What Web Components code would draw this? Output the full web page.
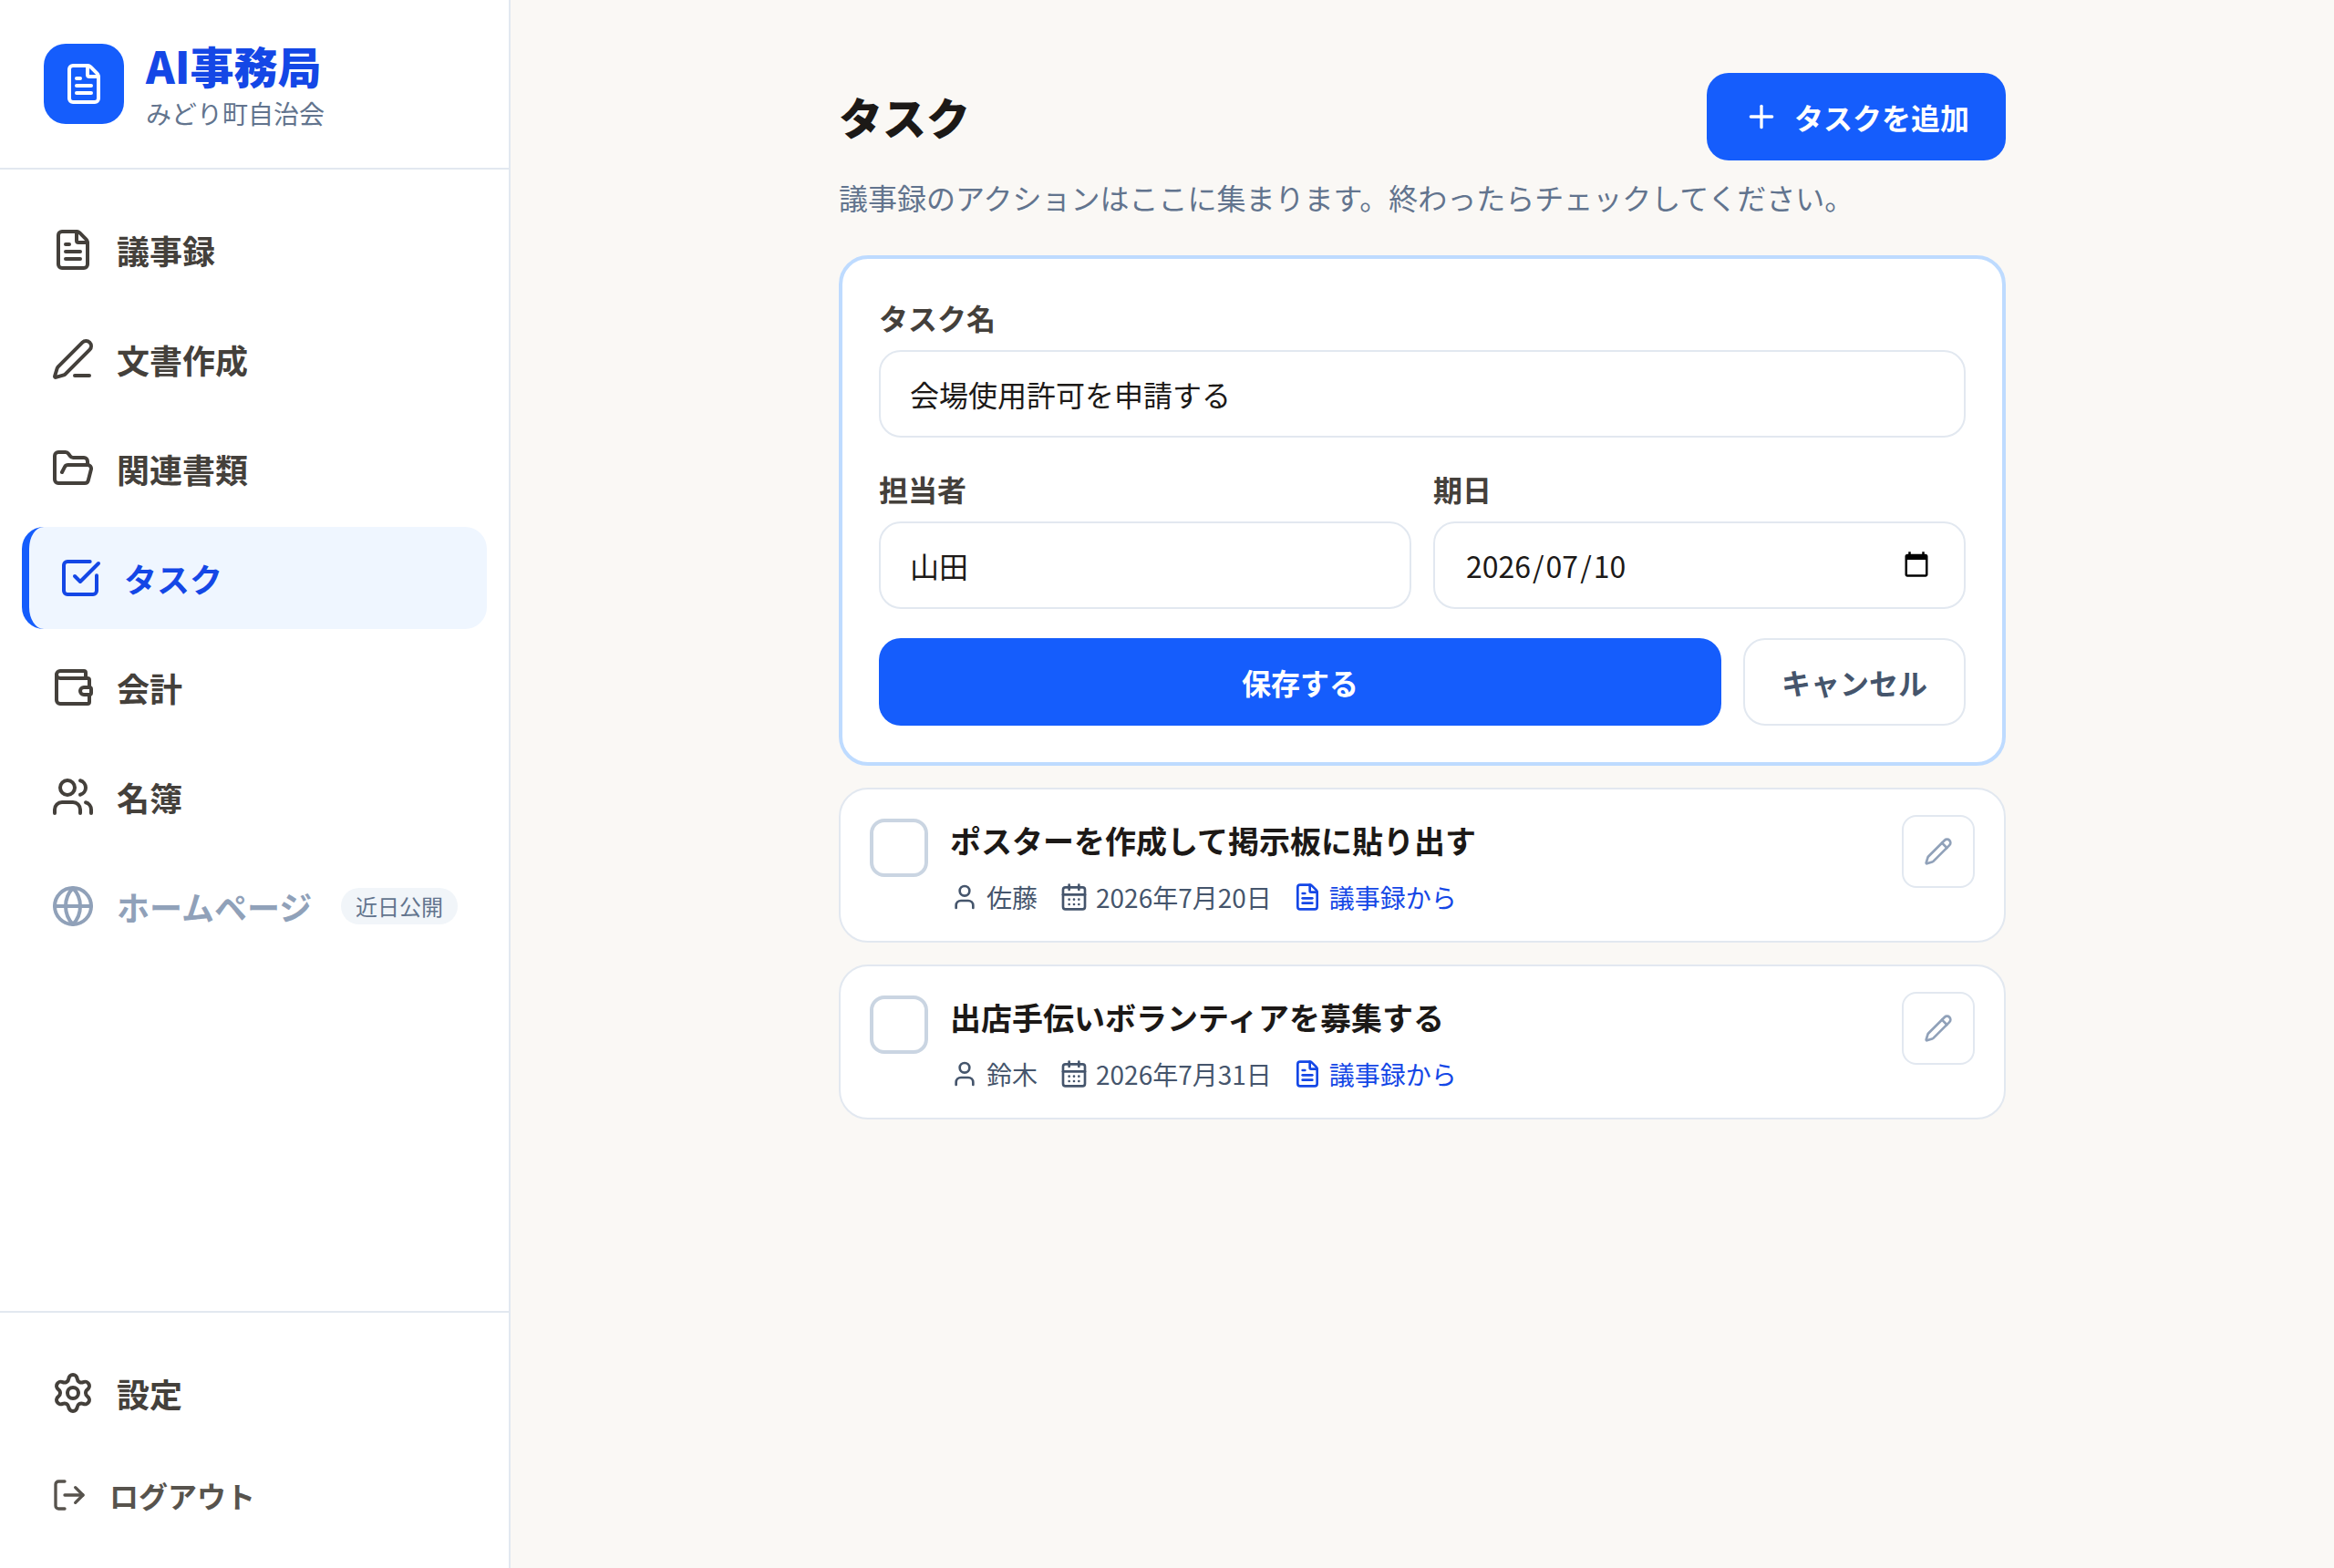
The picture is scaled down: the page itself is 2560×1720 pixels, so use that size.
<!DOCTYPE html>
<html lang="ja">
<head>
<meta charset="utf-8">
<title>AI事務局 - タスク</title>
<style>
    body {
        margin: 0;
        background: #faf8f5;
        color: #1c1917;
        font-family: "Noto Sans CJK JP", sans-serif;
        font-size: 32px;
        line-height: 48px;
    }
</style>
</head>
<body>
<task-app></task-app>

<script>
const icons = {
    'file-text': '<path d="M6 22a2 2 0 0 1-2-2V4a2 2 0 0 1 2-2h8a2.4 2.4 0 0 1 1.704.706l3.588 3.588A2.4 2.4 0 0 1 20 8v12a2 2 0 0 1-2 2z"/><path d="M14 2v5a1 1 0 0 0 1 1h5"/><path d="M10 9H8"/><path d="M16 13H8"/><path d="M16 17H8"/>',
    'pen-line': '<path d="M13 21h8"/><path d="M21.174 6.812a1 1 0 0 0-3.986-3.987L3.842 16.174a2 2 0 0 0-.5.83l-1.321 4.352a.5.5 0 0 0 .623.622l4.353-1.32a2 2 0 0 0 .83-.497z"/>',
    'folder-open': '<path d="m6 14 1.5-2.9A2 2 0 0 1 9.24 10H20a2 2 0 0 1 1.94 2.5l-1.54 6a2 2 0 0 1-1.95 1.5H4a2 2 0 0 1-2-2V5a2 2 0 0 1 2-2h3.9a2 2 0 0 1 1.69.9l.81 1.2a2 2 0 0 0 1.67.9H18a2 2 0 0 1 2 2v2"/>',
    'check-square': '<path d="M21 10.656V19a2 2 0 0 1-2 2H5a2 2 0 0 1-2-2V5a2 2 0 0 1 2-2h12.344"/><path d="m9 11 3 3L22 4"/>',
    'wallet': '<path d="M19 7V4a1 1 0 0 0-1-1H5a2 2 0 0 0 0 4h15a1 1 0 0 1 1 1v4h-3a2 2 0 0 0 0 4h3a1 1 0 0 0 1-1v-2a1 1 0 0 0-1-1"/><path d="M3 5v14a2 2 0 0 0 2 2h15a1 1 0 0 0 1-1v-4"/>',
    'users': '<path d="M16 21v-2a4 4 0 0 0-4-4H6a4 4 0 0 0-4 4v2"/><path d="M16 3.128a4 4 0 0 1 0 7.744"/><path d="M22 21v-2a4 4 0 0 0-3-3.87"/><circle cx="9" cy="7" r="4"/>',
    'globe': '<circle cx="12" cy="12" r="10"/><path d="M12 2a14.5 14.5 0 0 0 0 20 14.5 14.5 0 0 0 0-20"/><path d="M2 12h20"/>',
    'settings': '<path d="M9.671 4.136a2.34 2.34 0 0 1 4.659 0 2.34 2.34 0 0 0 3.319 1.915 2.34 2.34 0 0 1 2.33 4.033 2.34 2.34 0 0 0 0 3.831 2.34 2.34 0 0 1-2.33 4.033 2.34 2.34 0 0 0-3.319 1.915 2.34 2.34 0 0 1-4.659 0 2.34 2.34 0 0 0-3.32-1.915 2.34 2.34 0 0 1-2.33-4.033 2.34 2.34 0 0 0 0-3.831A2.34 2.34 0 0 1 6.35 6.051a2.34 2.34 0 0 0 3.319-1.915"/><circle cx="12" cy="12" r="3"/>',
    'log-out': '<path d="m16 17 5-5-5-5"/><path d="M21 12H9"/><path d="M9 21H5a2 2 0 0 1-2-2V5a2 2 0 0 1 2-2h4"/>',
    'plus': '<path d="M5 12h14"/><path d="M12 5v14"/>',
    'user': '<path d="M19 21v-2a4 4 0 0 0-4-4H9a4 4 0 0 0-4 4v2"/><circle cx="12" cy="7" r="4"/>',
    'calendar': '<path d="M8 2v4"/><path d="M16 2v4"/><rect width="18" height="18" x="3" y="4" rx="2"/><path d="M3 10h18"/><path d="M8 14h.01"/><path d="M12 14h.01"/><path d="M16 14h.01"/><path d="M8 18h.01"/><path d="M12 18h.01"/><path d="M16 18h.01"/>',
    'pencil': '<path d="M21.174 6.812a1 1 0 0 0-3.986-3.987L3.842 16.174a2 2 0 0 0-.5.83l-1.321 4.352a.5.5 0 0 0 .623.622l4.353-1.32a2 2 0 0 0 .83-.497z"/><path d="m15 5 4 4"/>',
    'date-picker': '<path fill="currentColor" stroke="none" d="M20 3h-1V1h-2v2H7V1H5v2H4c-1.1 0-2 .9-2 2v16c0 1.1.9 2 2 2h16c1.1 0 2-.9 2-2V5c0-1.1-.9-2-2-2zm0 18H4V8h16v13z"/>'
};

// Creates the open shadow root and fills it.
class BaseElement extends HTMLElement {

    constructor() {
        super();
        this.attachShadow({ mode: 'open' });
    }

    connectedCallback() {
        this.shadowRoot.innerHTML = this.render();
    }

}

class AppIcon extends BaseElement {

    render() {
        const size = this.getAttribute('size') || '48';
        return `
            <style>
                :host {
                    display: block;
                    flex: none;
                    width: ${size}px;
                    height: ${size}px;
                }
                svg {
                    display: block;
                    width: 100%;
                    height: 100%;
                }
            </style>
            <svg viewBox="0 0 24 24" fill="none" stroke="currentColor" stroke-width="2" stroke-linecap="round" stroke-linejoin="round">${icons[this.getAttribute('name')]}</svg>
        `;
    }

}

class NavItem extends BaseElement {

    render() {
        return `
            <style>
                :host {
                    display: flex;
                    align-items: center;
                    gap: 24px;
                    box-sizing: border-box;
                    height: 112px;
                    padding: 0 32px;
                    border-radius: 24px;
                    font-size: 36px;
                    font-weight: 700;
                    color: #44403b;
                    white-space: nowrap;
                }
                :host([active]) {
                    border-left: 8px solid #155dfc;
                    background: #eff6ff;
                    color: #1447e6;
                }
                :host([disabled]) {
                    color: #90a1b9;
                }
                :host([small]) {
                    height: 96px;
                    font-size: 32px;
                    color: #57534d;
                }
                ::slotted([slot="badge"]) {
                    margin-left: auto;
                    padding: 0 16px;
                    border-radius: 20px;
                    background: #f1f5f9;
                    color: #62748e;
                    font-size: 24px;
                    font-weight: 400;
                    line-height: 40px;
                }
            </style>
            <app-icon name="${this.getAttribute('icon')}" size="${this.hasAttribute('small') ? 40 : 48}"></app-icon>
            <span><slot></slot></span>
            <slot name="badge"></slot>
        `;
    }

}

class AppSidebar extends BaseElement {

    render() {
        return `
            <style>
                :host {
                    display: flex;
                    flex-direction: column;
                    flex: none;
                    box-sizing: border-box;
                    width: 560px;
                    background: #fff;
                    border-right: 2px solid #e2e8f0;
                }
                header {
                    display: flex;
                    align-items: center;
                    gap: 24px;
                    padding: 40px 48px;
                    border-bottom: 2px solid #e2e8f0;
                }
                .logo {
                    display: flex;
                    align-items: center;
                    justify-content: center;
                    width: 88px;
                    height: 88px;
                    border-radius: 24px;
                    background: #155dfc;
                    color: #fff;
                }
                .name {
                    margin-bottom: 2px;
                    font-size: 48px;
                    font-weight: 800;
                    line-height: 62px;
                    color: #1447e6;
                }
                .org {
                    font-size: 28px;
                    line-height: 40px;
                    color: #62748e;
                }
                nav, footer {
                    display: flex;
                    flex-direction: column;
                    gap: 8px;
                    padding: 32px 24px;
                }
                nav {
                    flex: 1;
                }
                footer {
                    border-top: 2px solid #e2e8f0;
                }
            </style>
            <header>
                <div class="logo"><app-icon name="file-text"></app-icon></div>
                <div>
                    <div class="name">AI事務局</div>
                    <div class="org">みどり町自治会</div>
                </div>
            </header>
            <nav>
                <nav-item icon="file-text">議事録</nav-item>
                <nav-item icon="pen-line">文書作成</nav-item>
                <nav-item icon="folder-open">関連書類</nav-item>
                <nav-item icon="check-square" active>タスク</nav-item>
                <nav-item icon="wallet">会計</nav-item>
                <nav-item icon="users">名簿</nav-item>
                <nav-item icon="globe" disabled>ホームページ<span slot="badge">近日公開</span></nav-item>
            </nav>
            <footer>
                <nav-item icon="settings">設定</nav-item>
                <nav-item icon="log-out" small>ログアウト</nav-item>
            </footer>
        `;
    }

}

class AppButton extends BaseElement {

    render() {
        const icon = this.getAttribute('icon');
        return `
            <style>
                :host {
                    display: flex;
                    align-items: center;
                    justify-content: center;
                    gap: 16px;
                    box-sizing: border-box;
                    height: 96px;
                    padding: 0 40px;
                    border-radius: 24px;
                    background: #155dfc;
                    color: #fff;
                    font-weight: 700;
                    white-space: nowrap;
                }
                :host([outline]) {
                    border: 2px solid #e2e8f0;
                    background: #fff;
                    color: #45556c;
                }
            </style>
            ${icon ? `<app-icon name="${icon}" size="40"></app-icon>` : ''}
            <span><slot></slot></span>
        `;
    }

}

class FormField extends BaseElement {

    render() {
        return `
            <style>
                :host {
                    display: block;
                }
                .label {
                    margin-bottom: 12px;
                    font-weight: 700;
                    color: #44403b;
                }
                .box {
                    display: flex;
                    align-items: center;
                    justify-content: space-between;
                    box-sizing: border-box;
                    height: 96px;
                    padding: 0 32px;
                    border: 2px solid #e2e8f0;
                    border-radius: 24px;
                    background: #fff;
                }
            </style>
            <div class="label">${this.getAttribute('label')}</div>
            <div class="box">
                <span><slot></slot></span>
                <slot name="end"></slot>
            </div>
        `;
    }

}

class TaskForm extends BaseElement {

    render() {
        return `
            <style>
                :host {
                    display: flex;
                    flex-direction: column;
                    gap: 32px;
                    padding: 40px;
                    border: 4px solid #bedbff;
                    border-radius: 32px;
                    background: #fff;
                }
                .row {
                    display: grid;
                    grid-template-columns: 1fr 1fr;
                    gap: 24px;
                }
                .actions {
                    display: flex;
                    gap: 24px;
                }
                .save {
                    flex: 1;
                }
                .part {
                    padding: 0 2px;
                }
                .picker {
                    margin: 0 5px 3px 0;
                    color: #000;
                }
            </style>
            <form-field label="タスク名">会場使用許可を申請する</form-field>
            <div class="row">
                <form-field label="担当者">山田</form-field>
                <form-field label="期日"><span class="part">2026</span>/<span class="part">07</span>/<span class="part">10</span><app-icon class="picker" slot="end" name="date-picker" size="30"></app-icon></form-field>
            </div>
            <div class="actions">
                <app-button class="save">保存する</app-button>
                <app-button outline>キャンセル</app-button>
            </div>
        `;
    }

}

class TaskCard extends BaseElement {

    render() {
        return `
            <style>
                :host {
                    display: flex;
                    align-items: flex-start;
                    gap: 24px;
                    padding: 28px 32px;
                    border: 2px solid #e2e8f0;
                    border-radius: 32px;
                    background: #fff;
                }
                .check {
                    box-sizing: border-box;
                    width: 64px;
                    height: 64px;
                    margin-top: 4px;
                    border: 4px solid #cad5e2;
                    border-radius: 16px;
                }
                .body {
                    flex: 1;
                }
                .title {
                    font-size: 34px;
                    font-weight: 700;
                    line-height: 55px;
                }
                .meta {
                    display: flex;
                    gap: 24px;
                    margin-top: 15px;
                    font-size: 28px;
                    line-height: 40px;
                    color: #45556c;
                }
                .meta span {
                    display: flex;
                    align-items: center;
                    gap: 8px;
                }
                .meta .source {
                    margin-left: -1px;
                    color: #1447e6;
                }
                .edit {
                    display: flex;
                    align-items: center;
                    justify-content: center;
                    box-sizing: border-box;
                    width: 80px;
                    height: 80px;
                    border: 2px solid #e2e8f0;
                    border-radius: 16px;
                    color: #90a1b9;
                }
            </style>
            <div class="check"></div>
            <div class="body">
                <div class="title"><slot></slot></div>
                <div class="meta">
                    <span><app-icon name="user" size="32"></app-icon>${this.getAttribute('assignee')}</span>
                    <span><app-icon name="calendar" size="32"></app-icon>${this.getAttribute('due')}</span>
                    <span class="source"><app-icon name="file-text" size="32"></app-icon>議事録から</span>
                </div>
            </div>
            <div class="edit"><app-icon name="pencil" size="32"></app-icon></div>
        `;
    }

}

class TaskApp extends BaseElement {

    render() {
        return `
            <style>
                :host {
                    display: flex;
                    min-height: 100vh;
                }
                main {
                    flex: 1;
                }
                .content {
                    width: 1280px;
                    margin: 0 auto;
                    padding: 80px 0;
                }
                .head {
                    display: flex;
                    align-items: center;
                    justify-content: space-between;
                }
                h1 {
                    margin: 0 0 2px;
                    font-size: 48px;
                    font-weight: 800;
                    line-height: 64px;
                }
                p {
                    margin: 16px 0 40px;
                    color: #62748e;
                }
                .list {
                    display: flex;
                    flex-direction: column;
                    gap: 24px;
                }
            </style>
            <app-sidebar></app-sidebar>
            <main>
                <div class="content">
                    <div class="head">
                        <h1>タスク</h1>
                        <app-button icon="plus">タスクを追加</app-button>
                    </div>
                    <p>議事録のアクションはここに集まります。終わったらチェックしてください。</p>
                    <div class="list">
                        <task-form></task-form>
                        <task-card assignee="佐藤" due="2026年7月20日">ポスターを作成して掲示板に貼り出す</task-card>
                        <task-card assignee="鈴木" due="2026年7月31日">出店手伝いボランティアを募集する</task-card>
                    </div>
                </div>
            </main>
        `;
    }

}

window.customElements.define('app-icon', AppIcon);
window.customElements.define('nav-item', NavItem);
window.customElements.define('app-sidebar', AppSidebar);
window.customElements.define('app-button', AppButton);
window.customElements.define('form-field', FormField);
window.customElements.define('task-form', TaskForm);
window.customElements.define('task-card', TaskCard);
window.customElements.define('task-app', TaskApp);
</script>
</body>
</html>
